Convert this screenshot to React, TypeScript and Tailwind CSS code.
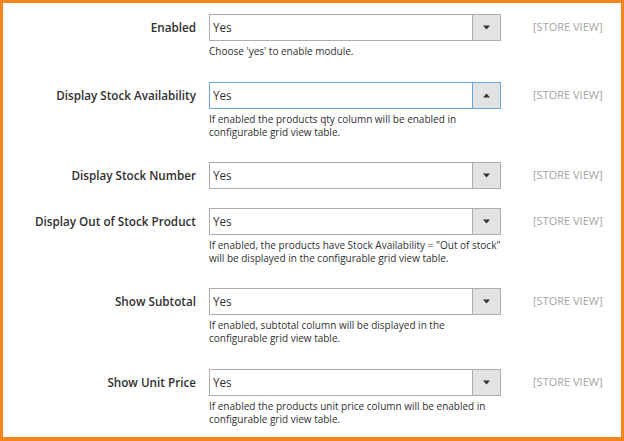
import React from "react";

type Row = { label: string; note?: string[]; open?: boolean; mt: string };

const rows: Row[] = [
  { label: "Enabled", note: ["Choose 'yes' to enable module."], mt: "mt-[11px]" },
  {
    label: "Display Stock Availability",
    note: ["If enabled the products qty column will be enabled in", "configurable grid view table."],
    open: true,
    mt: "mt-[24px]",
  },
  { label: "Display Stock Number", mt: "mt-[23px]" },
  {
    label: "Display Out of Stock Product",
    note: ['If enabled, the products have Stock Availability = "Out of stock"', "will be displayed in the configurable grid view table."],
    mt: "mt-[19px]",
  },
  {
    label: "Show Subtotal",
    note: ["If enabled, subtotal column will be displayed in the", "configurable grid view table."],
    mt: "mt-[23px]",
  },
  {
    label: "Show Unit Price",
    note: ["If enabled the products unit price column will be enabled in", "configurable grid view table."],
    mt: "mt-[24px]",
  },
];

function Arrow({ up }: { up?: boolean }) {
  return (
    <svg width="7" height="5" viewBox="0 0 7 5">
      {up ? <path d="M0 4.5 L3.5 0.5 L7 4.5 Z" fill="#333" /> : <path d="M0 0.5 L3.5 4.5 L7 0.5 Z" fill="#333" />}
    </svg>
  );
}

export default function App() {
  return (
    <div
      className="w-[624px] h-[441px] bg-white border-[#f5841f] border-t-[3px] border-l-[3px] border-r-[3px] border-b-[4px] overflow-hidden"
      style={{ fontFamily: '"Open Sans", "Noto Sans", sans-serif' }}
    >
      {rows.map((r) => (
        <div key={r.label} className={`flex ${r.mt}`}>
          <div className="w-[193px] shrink-0 h-[27px] flex items-center justify-end text-[11.7px] font-semibold text-[#303030] whitespace-nowrap">
            {r.label}
          </div>
          <div className="ml-[13px] w-[292px] shrink-0">
            <div
              className={`h-[27px] flex border ${r.open ? "border-[#6aa6dc]" : "border-[#adadad]"} bg-white`}
            >
              <div className="flex-1 flex items-center pl-[3px] text-[11.7px] text-[#303030]">Yes</div>
              <div
                className={`w-[28px] flex items-center justify-center bg-[#e3e3e3] border-l ${
                  r.open ? "border-[#6aa6dc]" : "border-[#adadad]"
                }`}
              >
                <Arrow up={r.open} />
              </div>
            </div>
            {r.note && (
              <div className="mt-[4px] text-[10px] leading-[13px] text-[#303030] whitespace-nowrap">
                {r.note.map((n) => (
                  <div key={n}>{n}</div>
                ))}
              </div>
            )}
          </div>
          <div className="ml-[32px] h-[27px] flex items-center text-[11px] text-[#a3a3a3] whitespace-nowrap">[STORE VIEW]</div>
        </div>
      ))}
    </div>
  );
}
